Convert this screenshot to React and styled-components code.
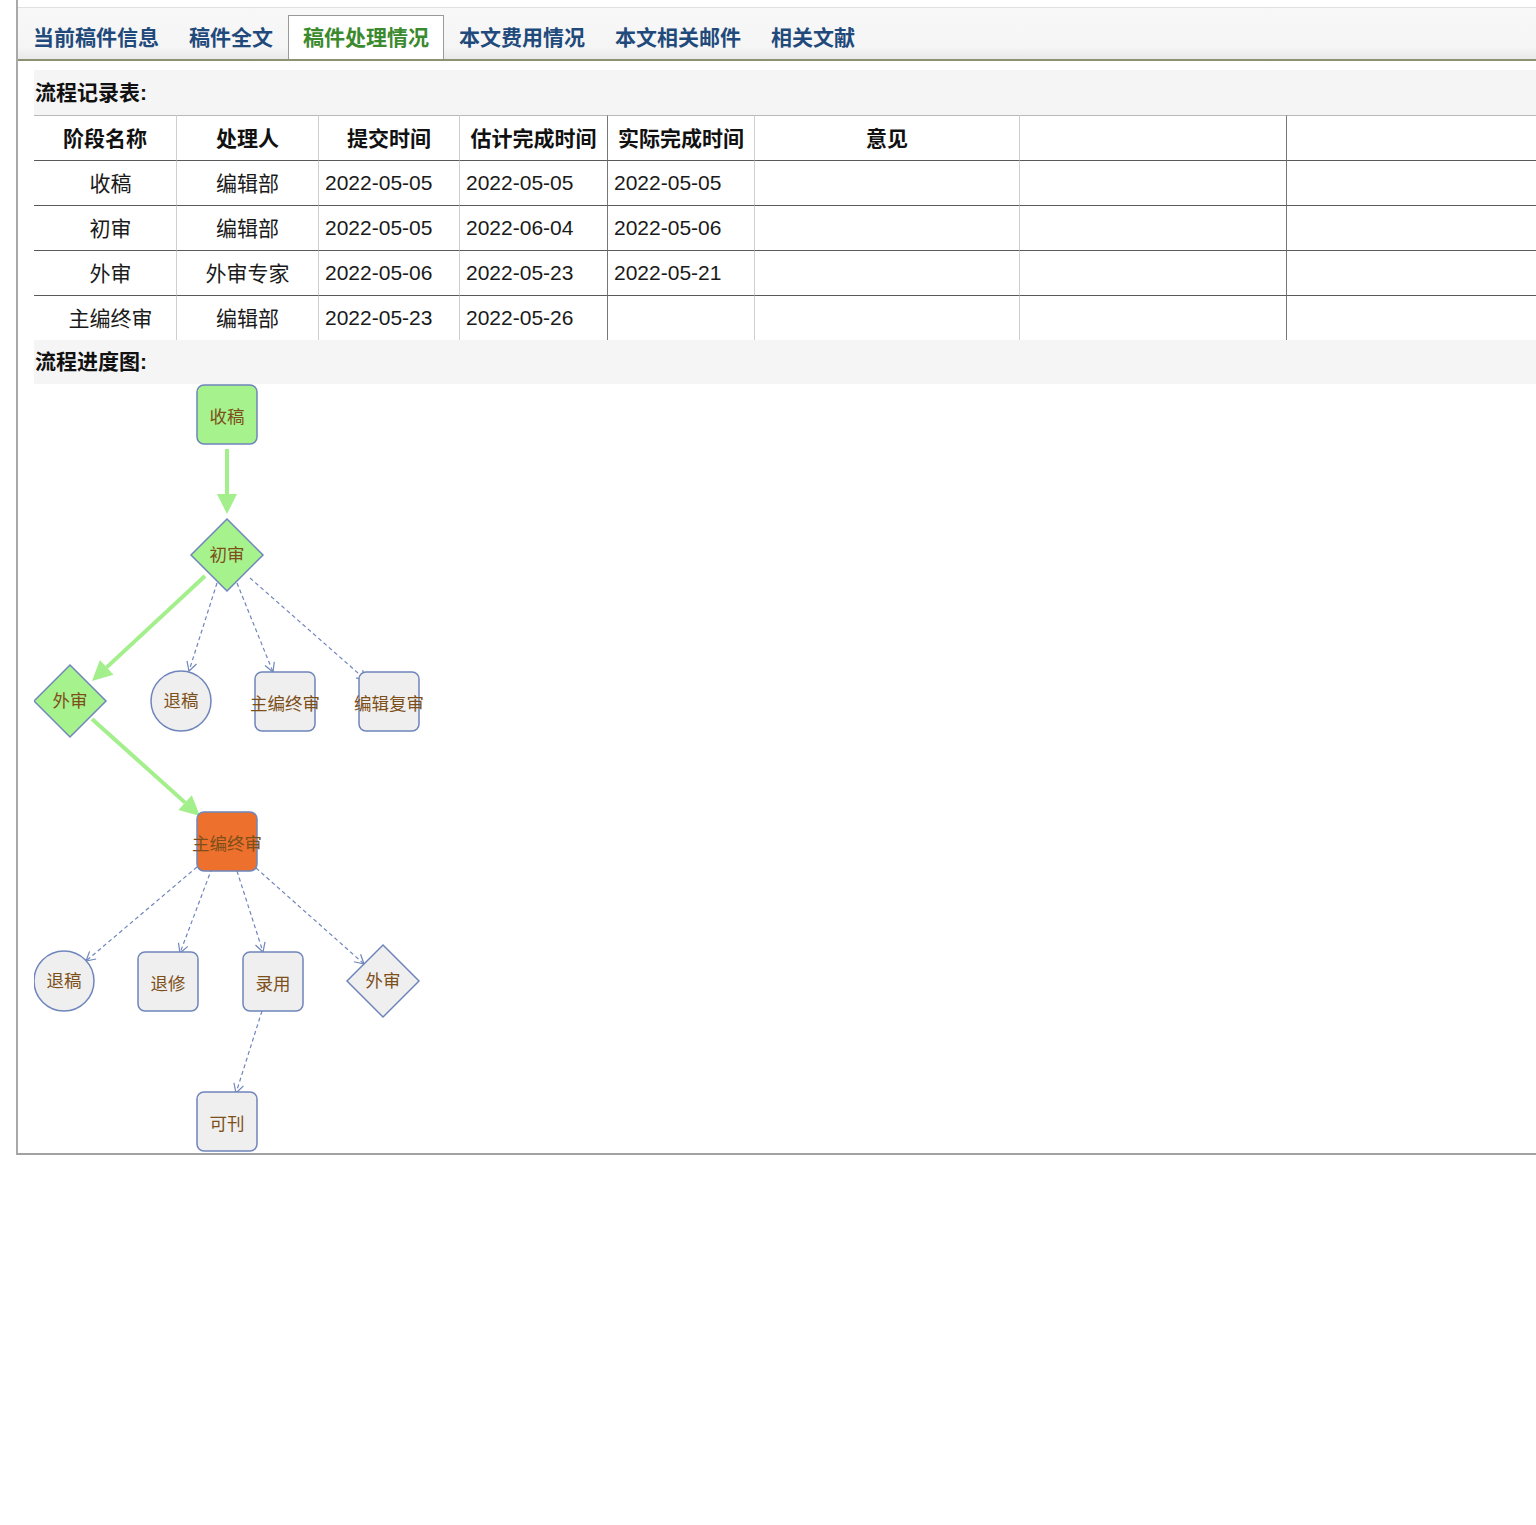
import React from "react";
import styled, { createGlobalStyle } from "styled-components";

const GlobalStyle = createGlobalStyle`
  html, body { margin: 0; padding: 0; background: #fff; overflow-x: hidden; }
  body { font-family: "Liberation Sans", "Noto Sans CJK SC", sans-serif; color: #111; }
`;

const Frame = styled.div`
  margin-left: 16px;
  width: 1560px;
  padding-top: 7px;
  border-left: 2px solid #a9a9a9;
  border-bottom: 2px solid #a2a2a2;
`;

const TabBar = styled.div`
  display: flex;
  align-items: flex-end;
  height: 54px;
  box-sizing: border-box;
  border-top: 1px solid #e0e0e0;
  border-bottom: 2px solid #8c9172;
  background: linear-gradient(to bottom, #f8f8f8 0%, #f5f5f5 78%, #e9e9e9 100%);
`;

const Tab = styled.div`
  height: 44px;
  line-height: 44px;
  padding: 0 14px;
  font-size: 21px;
  font-weight: 700;
  white-space: nowrap;
  box-sizing: border-box;
  color: ${(p) => (p.$active ? "#3b8a2e" : "#1f4a7b")};
  background: ${(p) => (p.$active ? "#fff" : "transparent")};
  border: 1px solid ${(p) => (p.$active ? "#9a9a9a" : "transparent")};
  border-bottom: none;
`;

const Content = styled.div`
  padding: 9px 0 0 16px;
`;

const SectionTitle = styled.div`
  height: ${(p) => p.$h}px;
  line-height: ${(p) => p.$h}px;
  background: #f5f5f5;
  font-size: 21px;
  font-weight: 700;
  color: #111;
  padding-left: 1px;
`;

const Table = styled.table`
  border-collapse: separate;
  border-spacing: 0;
  table-layout: fixed;
  width: 1519px;
  font-size: 21px;
`;

const Th = styled.th`
  height: 45px;
  padding: 0 0 3px 0;
  box-sizing: border-box;
  font-weight: 700;
  color: #111;
  text-align: center;
  border-top: 1px solid #b8b8b8;
  border-left: ${(p) => (p.$first ? "none" : `1px solid ${p.$dark ? "#777" : "#cfcfcf"}`)};
`;

const Td = styled.td`
  height: 45px;
  box-sizing: border-box;
  padding: ${(p) => (p.$first ? "0 0 2px 11px" : p.$center ? "0 0 2px 0" : "0 0 1px 6px")};
  color: #1a1a1a;
  text-align: ${(p) => (p.$center ? "center" : "left")};
  border-top: 1px solid #5a5a5a;
  border-left: ${(p) => (p.$first ? "none" : `1px solid ${p.$dark ? "#777" : "#cfcfcf"}`)};
  white-space: nowrap;
`;

const Diagram = styled.svg`
  display: block;
  width: 420px;
  height: 769px;
`;

const cols = [142, 142, 141, 148, 147, 265, 267, 267];
const darkCols = [4, 7];
const headers = ["阶段名称", "处理人", "提交时间", "估计完成时间", "实际完成时间", "意见", "", ""];
const rows = [
  ["收稿", "编辑部", "2022-05-05", "2022-05-05", "2022-05-05"],
  ["初审", "编辑部", "2022-05-05", "2022-06-04", "2022-05-06"],
  ["外审", "外审专家", "2022-05-06", "2022-05-23", "2022-05-21"],
  ["主编终审", "编辑部", "2022-05-23", "2022-05-26", ""],
];

const GREEN = "#a3ef8b";
const GREEN_NODE = "#a6f28c";
const STROKE = "#6f85bb";
const GRAY = "#efefef";
const ORANGE = "#ee702d";
const TEXT = "#7d4f1a";

function headPts(x1, y1, x2, y2, len, hw) {
  const dx = x2 - x1;
  const dy = y2 - y1;
  const d = Math.hypot(dx, dy);
  const ux = dx / d;
  const uy = dy / d;
  const bx = x2 - ux * len;
  const by = y2 - uy * len;
  const nx = -uy;
  const ny = ux;
  return {
    bx,
    by,
    l: [bx + nx * hw, by + ny * hw],
    r: [bx - nx * hw, by - ny * hw],
  };
}

function GreenArrow({ x1, y1, x2, y2 }) {
  const h = headPts(x1, y1, x2, y2, 20, 10);
  return (
    <g>
      <line x1={x1} y1={y1} x2={h.bx} y2={h.by} stroke={GREEN} strokeWidth="4" />
      <polygon points={`${h.l.join(",")} ${x2},${y2} ${h.r.join(",")}`} fill={GREEN} />
    </g>
  );
}

function DashArrow({ x1, y1, x2, y2 }) {
  const h = headPts(x1, y1, x2, y2, 9, 5);
  return (
    <g>
      <line x1={x1} y1={y1} x2={x2} y2={y2} stroke={STROKE} strokeWidth="1.2" strokeDasharray="4 3" />
      <polyline
        points={`${h.l.join(",")} ${x2},${y2} ${h.r.join(",")}`}
        fill="none"
        stroke={STROKE}
        strokeWidth="1.2"
      />
    </g>
  );
}

function Label({ x, y, children }) {
  return (
    <text
      x={x}
      y={y}
      textAnchor="middle"
      dominantBaseline="central"
      fontSize="17.5"
      fill={TEXT}
      fontFamily='"Noto Sans CJK SC", sans-serif'
    >
      {children}
    </text>
  );
}

function RectNode({ x, y, fill, label }) {
  return (
    <g>
      <rect x={x} y={y} width="60" height="59" rx="7" fill={fill} stroke={STROKE} strokeWidth="1.5" />
      <Label x={x + 30} y={y + 30}>{label}</Label>
    </g>
  );
}

function DiamondNode({ cx, cy, fill, label }) {
  const r = 36;
  return (
    <g>
      <polygon
        points={`${cx},${cy - r} ${cx + r},${cy} ${cx},${cy + r} ${cx - r},${cy}`}
        fill={fill}
        stroke={STROKE}
        strokeWidth="1.5"
      />
      <Label x={cx} y={cy - 1.5}>{label}</Label>
    </g>
  );
}

function CircleNode({ cx, cy, label }) {
  return (
    <g>
      <circle cx={cx} cy={cy} r="30" fill={GRAY} stroke={STROKE} strokeWidth="1.5" />
      <Label x={cx} y={cy - 2}>{label}</Label>
    </g>
  );
}

function FlowChart() {
  return (
    <Diagram viewBox="34 383 420 769">
      <GreenArrow x1={227} y1={448} x2={227} y2={513} />
      <GreenArrow x1={205} y1={575} x2={92} y2={680} />
      <GreenArrow x1={92} y1={718} x2={200} y2={815} />

      <DashArrow x1={217} y1={582} x2={189} y2={670} />
      <DashArrow x1={237} y1={582} x2={273} y2={671} />
      <DashArrow x1={250} y1={577} x2={366} y2={679} />

      <DashArrow x1={197} y1={866} x2={86} y2={960} />
      <DashArrow x1={212} y1={867} x2={180} y2={952} />
      <DashArrow x1={237} y1={870} x2={263} y2={951} />
      <DashArrow x1={256} y1={867} x2={364} y2={963} />
      <DashArrow x1={262} y1={1010} x2={236} y2={1092} />

      <RectNode x={197} y={384} fill={GREEN_NODE} label="收稿" />
      <DiamondNode cx={227} cy={554} fill={GREEN_NODE} label="初审" />
      <DiamondNode cx={70} cy={700} fill={GREEN_NODE} label="外审" />
      <CircleNode cx={181} cy={700} label="退稿" />
      <RectNode x={255} y={671} fill={GRAY} label="主编终审" />
      <RectNode x={359} y={671} fill={GRAY} label="编辑复审" />

      <RectNode x={197} y={811} fill={ORANGE} label="主编终审" />
      <CircleNode cx={64} cy={980} label="退稿" />
      <RectNode x={138} y={951} fill={GRAY} label="退修" />
      <RectNode x={243} y={951} fill={GRAY} label="录用" />
      <DiamondNode cx={383} cy={980} fill={GRAY} label="外审" />
      <RectNode x={197} y={1091} fill={GRAY} label="可刊" />
    </Diagram>
  );
}

const tabs = ["当前稿件信息", "稿件全文", "稿件处理情况", "本文费用情况", "本文相关邮件", "相关文献"];

export default function App() {
  return (
    <>
      <GlobalStyle />
      <Frame>
        <TabBar>
          {tabs.map((t, i) => (
            <Tab key={t} $active={i === 2}>
              {t}
            </Tab>
          ))}
        </TabBar>
        <Content>
          <SectionTitle $h={45}>流程记录表:</SectionTitle>
          <Table>
            <colgroup>
              {cols.map((w, i) => (
                <col key={i} style={{ width: w }} />
              ))}
            </colgroup>
            <thead>
              <tr>
                {headers.map((h, i) => (
                  <Th key={i} $first={i === 0} $dark={darkCols.includes(i)}>
                    {h}
                  </Th>
                ))}
              </tr>
            </thead>
            <tbody>
              {rows.map((r, ri) => (
                <tr key={ri}>
                  {cols.map((_, ci) => (
                    <Td key={ci} $first={ci === 0} $center={ci < 2} $dark={darkCols.includes(ci)}>
                      {r[ci] || ""}
                    </Td>
                  ))}
                </tr>
              ))}
            </tbody>
          </Table>
          <SectionTitle $h={44}>流程进度图:</SectionTitle>
          <FlowChart />
        </Content>
      </Frame>
    </>
  );
}
